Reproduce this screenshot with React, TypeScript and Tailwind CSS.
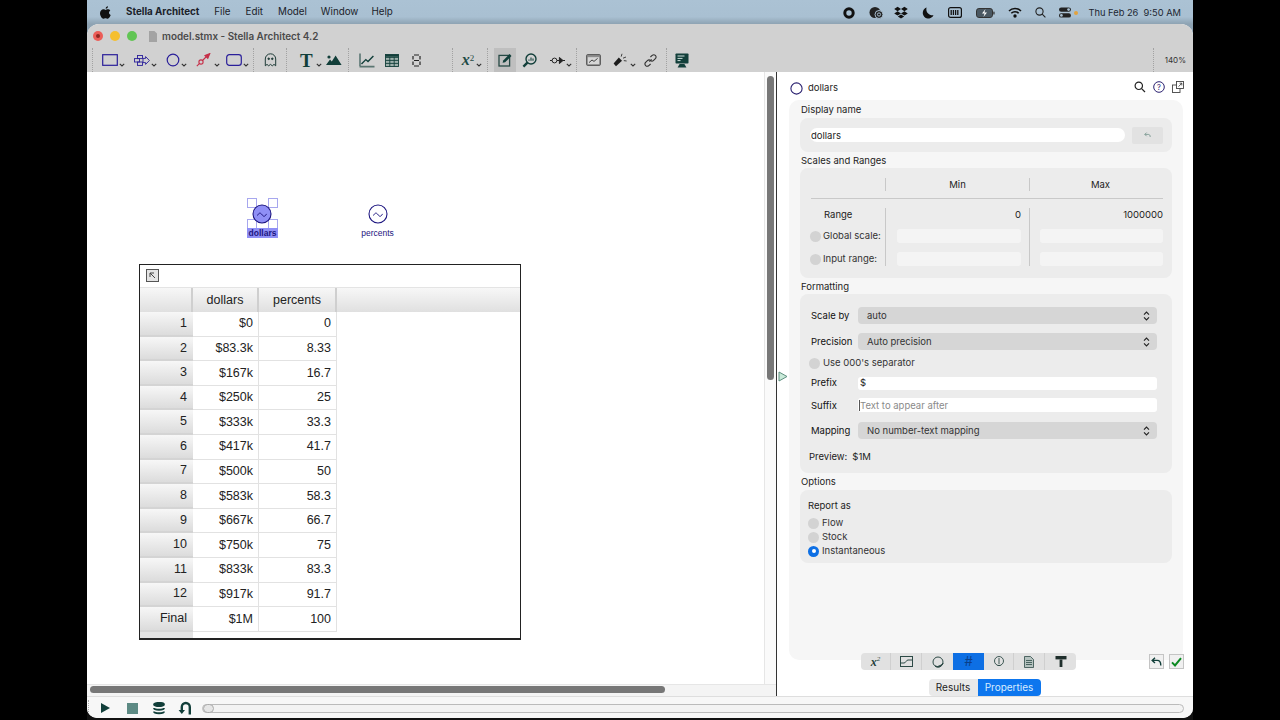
import React from "react";

const NAVY = "#2a1f9a";
const TEAL = "#123f3a";

function Chev({ className = "" }: { className?: string }) {
  return (
    <svg width="6" height="4" viewBox="0 0 6 4" className={className}>
      <path d="M.8.8 3 3 5.2.8" fill="none" stroke="#333" strokeWidth="1.1" />
    </svg>
  );
}

function Sep() {
  return <div className="h-[24px] w-0 border-l border-dotted border-[#a2a2a2]" />;
}

function Wave({ cx, cy }: { cx: number; cy: number }) {
  return (
    <path
      d={`M${cx - 4.5} ${cy + 1.5}c1.5-3 3-3 4.5-.8s3 2.2 4.5-.8`}
      fill="none"
      stroke="#1d1680"
      strokeWidth="1"
    />
  );
}

function Stepper() {
  return (
    <svg width="7" height="10" viewBox="0 0 7 10">
      <path d="M1 3.6 3.5 1 6 3.6M1 6.4 3.5 9 6 6.4" fill="none" stroke="#222" strokeWidth="1.1" />
    </svg>
  );
}

function Radio() {
  return <div className="w-[11px] h-[11px] rounded-full bg-[#d3d3d3] shrink-0" />;
}

function Toolbar() {
  return (
    <div className="h-[24px] flex items-center pl-[5px]">
      <Sep />
      <svg className="ml-[9px]" width="16" height="12" viewBox="0 0 16 12"><rect x=".7" y=".7" width="14.6" height="10.6" fill="none" stroke={NAVY} strokeWidth="1.2" /></svg>
      <Chev className="ml-[1px] mt-[9px]" />
      <svg className="ml-[9px]" width="16" height="11" viewBox="0 0 16 11" fill="none" stroke={NAVY} strokeWidth=".9"><rect x=".5" y="3.600" width="5" height="3.400" /><rect x="3.500" y=".5" width="5" height="3.100" /><rect x="3.500" y="7" width="5" height="3.400" /><path d="M9 3.400h2.600V1.600L15.400 5.500l-3.800 3.900V7.600H9z" /></svg>
      <Chev className="ml-[1px] mt-[9px]" />
      <svg className="ml-[9px]" width="14" height="14" viewBox="0 0 14 14"><circle cx="7" cy="7" r="5.8" fill="none" stroke={NAVY} strokeWidth="1.2" /></svg>
      <Chev className="ml-[1px] mt-[9px]" />
      <svg className="ml-[9px]" width="15" height="14" viewBox="0 0 15 14" fill="none" stroke="#c62f48" strokeWidth="1.1"><path d="M.8 13.2 3.6 10.4" /><circle cx="5" cy="9" r="2.1" /><path d="M6.5 7.5 10 4" /><path d="M9 2.6 13.8.6 11.8 5.4z" fill="#c62f48" /></svg>
      <Chev className="ml-[3px] mt-[9px]" />
      <svg className="ml-[6px]" width="16" height="12" viewBox="0 0 16 12"><rect x=".7" y=".7" width="14.6" height="10.6" rx="2.6" fill="none" stroke={NAVY} strokeWidth="1.2" /></svg>
      <Chev className="ml-[1px] mt-[9px]" />
      <div className="ml-[4px]"><Sep /></div>
      <svg className="ml-[10px]" width="13" height="14" viewBox="0 0 13 14" fill="none" stroke="#1e3b37" strokeWidth="1"><path d="M1.3 12.8V6a5.2 5.2 0 0 1 10.4 0v6.8l-1.7-1.4-1.7 1.4-1.8-1.4-1.8 1.4L3 11.4z" /><circle cx="4.7" cy="5.8" r=".8" fill="#1e3b37" /><circle cx="8.3" cy="5.8" r=".8" fill="#1e3b37" /></svg>
      <div className="ml-[9px]"><Sep /></div>
      <span className="ml-[13px] text-[19px] leading-none font-bold text-[#123f3a] font-['Liberation_Serif',serif]">T</span>
      <Chev className="ml-[3px] mt-[9px]" />
      <svg className="ml-[4px]" width="16" height="12" viewBox="0 0 16 12" fill={TEAL}><circle cx="3" cy="3" r="1.6" /><path d="M0 11 4 5.6l1.8 2L9.6 1.4 15.6 11z" /></svg>
      <div className="ml-[6px]"><Sep /></div>
      <svg className="ml-[10px]" width="16" height="15" viewBox="0 0 16 15" fill="none" stroke={TEAL}><path d="M1 .5v12.6" strokeWidth="1" /><path d="M.5 13.6h15" strokeWidth="1.6" stroke="#5b7672" /><path d="M2.5 11 6.8 6.6l2.2 2L14.4 3" strokeWidth="1.4" /></svg>
      <svg className="ml-[10px]" width="14" height="13" viewBox="0 0 14 13" fill="none" stroke={TEAL} strokeWidth=".9"><rect x=".5" y=".5" width="13" height="12" fill="#9db0ac" /><path d="M.5 3.4h13M.5 6.4h13M.5 9.4h13M4.8 3v9.5M9.2 3v9.5" /><path d="M.5 1.7h13" strokeWidth="2.2" /></svg>
      <svg className="ml-[13px]" width="9" height="13" viewBox="0 0 9 13" fill="none" stroke="#222" strokeWidth="1.2"><path d="M2 1h5M1 2v3.500M8 2v3.500M2 6.500h5M1 7.500v3.500M8 7.500v3.500M2 12h5" /></svg>
      <div className="ml-[31px]"><Sep /></div>
      <span className="ml-[9px] text-[16px] leading-none font-bold italic text-[#1f4b45] font-['Liberation_Serif',serif]">x<sup className="text-[9px] font-normal not-italic">2</sup></span>
      <Chev className="ml-[2px] mt-[9px]" />
      <div className="ml-[5px]"><Sep /></div>
      <div className="ml-[6px] w-[22px] h-[24px] bg-[#bfbfbf] flex items-center justify-center">
        <svg width="15" height="14" viewBox="0 0 15 14" fill="none"><rect x="1" y="2.4" width="10.6" height="10.6" stroke="#264944" strokeWidth="1.3" /><path d="M4.6 9.8 5.2 7.4 11.6 1l1.9 1.9-6.4 6.4z" fill="#123f3a" /></svg>
      </div>
      <svg className="ml-[6px]" width="15" height="15" viewBox="0 0 15 15" fill="none" stroke={TEAL}><circle cx="9" cy="6" r="5" strokeWidth="1.4" /><path d="M5.4 9.6 1.4 13.6" strokeWidth="2.4" /><path d="M7 7.8V6.4M9 7.8V4.6M11 7.8V5.6" strokeWidth="1.1" /></svg>
      <svg className="ml-[13px]" width="15" height="9" viewBox="0 0 15 9" fill="none" stroke="#222" strokeWidth="1"><path d="M0 4.5h2" /><circle cx="4.5" cy="4.5" r="2.4" /><path d="M7 4.5h2.4" /><path d="M9.4 1.4 13 4.5 9.4 7.6z" fill="#222" /><path d="M13 4.5h2" /></svg>
      <Chev className="ml-[1px] mt-[9px]" />
      <div className="ml-[4px]"><Sep /></div>
      <svg className="ml-[9px]" width="15" height="12" viewBox="0 0 15 12" fill="none"><rect x=".6" y=".6" width="13.8" height="10.8" rx="1" fill="#8d8d8d" stroke="#555" /><rect x="1.8" y="3.2" width="11.4" height="7" fill="#d7d7d7" /><path d="M3 8.6 6 6l2 1.4 3.6-3" stroke="#333" strokeWidth=".9" /></svg>
      <svg className="ml-[12px]" width="14" height="14" viewBox="0 0 14 14" fill="#1c1c1c"><path d="M.6 10.6 5.8 4.6 9 7.8 3 13.2z" /><path d="M8.2 3.6 9 .8M10 5.2 13 4M10.8 7.6 13.6 8" stroke="#1c1c1c" strokeWidth=".8" /></svg>
      <Chev className="ml-[3px] mt-[9px]" />
      <svg className="ml-[8px]" width="13" height="13" viewBox="0 0 13 13" fill="none" stroke="#333" strokeWidth="1.1"><path d="M5.4 7.6 7.6 5.4M6.4 3 8.4 1.2a2.3 2.3 0 0 1 3.2 3.2L9.6 6.4a2.3 2.3 0 0 1-3.2 0" /><path d="M6.6 10 4.6 11.8a2.3 2.3 0 0 1-3.2-3.2L3.4 6.6a2.3 2.3 0 0 1 3.2 0" /></svg>
      <div className="ml-[9px]"><Sep /></div>
      <svg className="ml-[8px]" width="14" height="15" viewBox="0 0 14 15"><rect x=".5" y=".5" width="13" height="10" rx=".8" fill={TEAL} /><path d="M2.5 3h7M2.5 5.4h5M2.5 7.6h3" stroke="#cfe0dc" strokeWidth="1" /><path d="M4.6 11h4.8l2 3.4H2.6z" fill={TEAL} /></svg>
      <div className="ml-auto flex items-center">
        <Sep />
        <span className="ml-[11px] mr-[7px] text-[8px] text-[#333]">140%</span>
      </div>
    </div>
  );
}

function StatusIcons() {
  return (
    <div className="ml-auto flex items-center pr-[12px] text-[#111]">
      <svg width="12" height="12" viewBox="0 0 12 12"><circle cx="6" cy="6" r="4.2" fill="none" stroke="#111" strokeWidth="3" /></svg>
      <svg className="ml-[14px]" width="15" height="13" viewBox="0 0 15 13"><circle cx="6" cy="6.5" r="5.5" fill="#222" /><circle cx="10" cy="8.5" r="4" fill="#222" stroke="#a9c0d2" strokeWidth="1" /><circle cx="10" cy="8.5" r="1.6" fill="none" stroke="#a9c0d2" /></svg>
      <svg className="ml-[10px]" width="14" height="13" viewBox="0 0 14 13" fill="#111"><path d="M3.6.8 7 3 3.6 5.2.2 3zM10.4.8 13.8 3l-3.4 2.2L7 3zM3.6 5.2 7 7.4 3.6 9.6.2 7.4zM10.4 5.2l3.4 2.2-3.4 2.2L7 7.4zM3.8 10.4 7 8.4l3.2 2L7 12.4z" /></svg>
      <svg className="ml-[14px]" width="12" height="12" viewBox="0 0 12 12"><path d="M4.6.6a5.6 5.6 0 1 0 6.9 7.6A6 6 0 0 1 4.6.6z" fill="#111" /></svg>
      <svg className="ml-[14px]" width="14" height="11" viewBox="0 0 14 11"><rect x=".6" y=".6" width="12.8" height="9.8" rx="2" fill="none" stroke="#111" strokeWidth="1.2" /><path d="M3.2 3v5M5.4 3v5M7.6 3v5M9.8 3v5" stroke="#111" strokeWidth="1.3" /></svg>
      <svg className="ml-[14px]" width="19" height="10" viewBox="0 0 19 10"><rect x=".5" y=".5" width="16" height="9" rx="2.4" fill="#4a5862" stroke="#333" /><rect x="17.3" y="3.4" width="1.3" height="3.2" rx=".6" fill="#333" /><path d="M9.5 1 6 5.4h2.6L7.4 9 11 4.6H8.4z" fill="#fff" /></svg>
      <svg className="ml-[13px]" width="14" height="11" viewBox="0 0 14 11" fill="none" stroke="#111" strokeWidth="1.6"><path d="M1 4a8.4 8.4 0 0 1 12 0M3.3 6.3a5.2 5.2 0 0 1 7.4 0" /><circle cx="7" cy="9" r=".9" fill="#111" /></svg>
      <svg className="ml-[13px]" width="11" height="11" viewBox="0 0 11 11" fill="none" stroke="#222" strokeWidth="1.1"><circle cx="4.5" cy="4.5" r="3.6" /><path d="M7.2 7.2 10.4 10.4" /></svg>
      <svg className="ml-[13px]" width="13" height="11" viewBox="0 0 13 11"><rect x="0" y=".4" width="12" height="4.4" rx="2.2" fill="#222" /><circle cx="9.6" cy="2.6" r="1.4" fill="#a9c0d2" /><rect x="0" y="6.2" width="12" height="4.4" rx="2.2" fill="#222" /><circle cx="2.4" cy="8.4" r="1.4" fill="#a9c0d2" /></svg>
      <div className="ml-[2px] w-[4px] h-[4px] rounded-full bg-[#e2a23f]" />
      <span className="ml-[10px] text-[9.3px] text-[#1c2630] whitespace-pre">Thu Feb 26  9:50 AM</span>
    </div>
  );
}

function Handle({ className }: { className: string }) {
  return <div className={`absolute w-[10px] h-[10px] bg-white border border-[#a7a7ee] ${className}`} />;
}

const rows = [
  ["1", "$0", "0"], ["2", "$83.3k", "8.33"], ["3", "$167k", "16.7"], ["4", "$250k", "25"],
  ["5", "$333k", "33.3"], ["6", "$417k", "41.7"], ["7", "$500k", "50"], ["8", "$583k", "58.3"],
  ["9", "$667k", "66.7"], ["10", "$750k", "75"], ["11", "$833k", "83.3"], ["12", "$917k", "91.7"],
  ["Final", "$1M", "100"],
];

function DataTable() {
  return (
    <div className="w-[382px] h-[376px] border border-[#222] border-b-[2px] bg-white flex flex-col font-['Liberation_Sans',sans-serif] text-[12.5px] text-[#222]">
      <div className="h-[23px] flex items-center pl-[6px] pb-[2px] shrink-0 border-b border-[#e4e4e4]">
        <div className="w-[13px] h-[13px] bg-[#e4e4e4] border-[1.5px] border-[#555] flex items-center justify-center">
          <svg width="7" height="7" viewBox="0 0 7 7"><path d="M1 1h4M1 1v4M1 1l5 5" stroke="#444" strokeWidth="1" fill="none" /></svg>
        </div>
      </div>
      <div className="h-[24px] flex shrink-0 bg-gradient-to-b from-[#f7f7f7] to-[#e0e0e0]">
        <div className="w-[53px] border-r-2 border-[#cfcfcf]" />
        <div className="w-[66px] border-r-2 border-[#cfcfcf] flex items-center justify-center">dollars</div>
        <div className="w-[78px] border-r-2 border-[#cfcfcf] flex items-center justify-center">percents</div>
      </div>
      {rows.map((r) => (
        <div key={r[0]} className="h-[24.6px] flex shrink-0">
          <div className="w-[53px] flex items-center justify-end pr-[6px] bg-gradient-to-b from-[#f7f7f7] to-[#dcdcdc] border-b-2 border-[#d4d4d4]">{r[0]}</div>
          <div className="w-[66px] flex items-center justify-end pr-[5px] border-r border-b border-[#e2e2e2]">{r[1]}</div>
          <div className="w-[78px] flex items-center justify-end pr-[5px] border-r border-b border-[#e2e2e2]">{r[2]}</div>
        </div>
      ))}
      <div className="w-[53px] flex-1 bg-[#e2e2e2]" />
    </div>
  );
}

function Canvas() {
  return (
    <div className="relative flex-1 bg-white pl-[52px] pt-[192px]">
      <div className="absolute left-[160px] top-[126px] w-[31px] h-[41px]">
        <Handle className="left-0 top-0" />
        <Handle className="right-0 top-0" />
        <Handle className="left-0 top-[21px]" />
        <Handle className="right-0 top-[21px]" />
        <svg className="absolute left-[5px] top-[6px]" width="20" height="20" viewBox="0 0 20 20">
          <circle cx="10" cy="10" r="9" fill="#8f8ff6" stroke="#1d1680" strokeWidth="1.1" />
          <Wave cx={10} cy={10} />
        </svg>
        <div className="absolute left-0 top-[30px] w-[31px] h-[10px] bg-[#8f8ff6] text-[8.5px] leading-[10px] font-bold text-center text-[#1d1680] font-['Liberation_Sans',sans-serif]">dollars</div>
      </div>
      <div className="absolute left-[270px] top-[132px] w-[41px] flex flex-col items-center">
        <svg width="20" height="20" viewBox="0 0 20 20">
          <circle cx="10" cy="10" r="9" fill="none" stroke="#1d1680" strokeWidth="1.1" />
          <Wave cx={10} cy={10} />
        </svg>
        <span className="mt-[4px] text-[8.5px] leading-[10px] text-[#1d1680] font-['Liberation_Sans',sans-serif]">percents</span>
      </div>
      <DataTable />
    </div>
  );
}

function SelectBox({ label, value }: { label: string; value: string }) {
  return (
    <div className="flex items-center h-[17px] pl-[11px]">
      <span className="w-[47px] text-[#111] pt-[1px]">{label}</span>
      <div className="w-[299px] h-[17px] rounded-[4px] bg-[#d6d6d6] flex items-center justify-between pl-[9px] pr-[7px] text-[#333]">
        <span className="pt-[1px]">{value}</span>
        <Stepper />
      </div>
    </div>
  );
}

function Properties() {
  return (
    <div className="w-[416px] flex flex-col font-['Inter',sans-serif] text-[9.5px] bg-white relative">
      <div className="h-[28px] flex items-center pl-[13px] pr-[9px] pt-[4px] shrink-0">
        <svg width="13" height="13" viewBox="0 0 13 13"><circle cx="6.5" cy="6.5" r="5.6" fill="none" stroke="#2b2170" strokeWidth="1.1" /></svg>
        <span className="ml-[5px] text-[#222]">dollars</span>
        <div className="ml-auto flex items-center gap-[7px] -mt-[2px]">
          <svg width="12" height="12" viewBox="0 0 12 12" fill="none" stroke="#222" strokeWidth="1.2"><circle cx="4.8" cy="4.8" r="3.7" /><path d="M7.6 7.6 11 11" /></svg>
          <svg width="12" height="12" viewBox="0 0 12 12" fill="none" stroke="#2b2170"><circle cx="6" cy="6" r="5.3" /><text x="6" y="8.7" textAnchor="middle" fontSize="7.5" fill="#2b2170" stroke="none">?</text></svg>
          <svg width="12" height="12" viewBox="0 0 12 12" fill="none" stroke="#444" strokeWidth=".9"><rect x=".5" y="4" width="7.5" height="7.5" /><rect x="4.5" y=".5" width="7" height="7" fill="#fff" /><path d="M6.6 5.6 9.8 2.2M7.6 2.2h2.2v2.2" /></svg>
        </div>
      </div>
      <div className="ml-[12px] mr-[10px] h-[560px] rounded-[10px] bg-[#f6f6f6] shrink-0">
        <div className="h-[18px] pl-[12px] pt-[2px] flex items-center text-[#1d1d1d]">Display name</div>
        <div className="mx-[11px] h-[34px] rounded-[8px] bg-[#ececec] flex items-center pl-[10px]">
          <div className="w-[315px] h-[14px] rounded-full bg-white flex items-center pl-[1px] pt-[2px] text-[#222]">dollars</div>
          <div className="ml-[7px] w-[31px] h-[17px] rounded-[2px] bg-[#e2e2e2] flex items-center justify-center">
            <svg width="7" height="6" viewBox="0 0 7 6" fill="none" stroke="#7d9a92" strokeWidth=".9"><path d="M2.6.6.8 2.4l1.8 1.8M.8 2.4h3.4c1.4 0 2 .8 2 2.6" /></svg>
          </div>
        </div>
        <div className="h-[16px] pl-[12px] pt-[2px] flex items-center text-[#1d1d1d]">Scales and Ranges</div>
        <div className="mx-[11px] h-[110px] rounded-[8px] bg-[#ececec] pl-[11px] pr-[9px] pt-[10px]">
          <div className="flex h-[13px] items-center text-[#222]">
            <div className="w-[74px] h-full" />
            <div className="w-[144px] h-full border-l border-[#c8c8c8] flex items-center justify-center pt-[1px]">Min</div>
            <div className="flex-1 h-full border-l border-[#c8c8c8] flex items-center justify-center pl-[8px] pt-[1px]">Max</div>
          </div>
          <div className="mt-[7px] border-t border-[#c9c9c9]" />
          <div className="mt-[9px] flex">
            <div className="w-[74px] flex flex-col">
              <div className="h-[15px] pl-[13px] flex items-center text-[#222]">Range</div>
              <div className="mt-[6px] h-[14px] flex items-center gap-[2px] text-[#333]"><div className="-ml-[1px]"><Radio /></div><span>Global scale:</span></div>
              <div className="mt-[9px] h-[14px] flex items-center gap-[2px] text-[#333]"><div className="-ml-[1px]"><Radio /></div><span>Input range:</span></div>
            </div>
            <div className="w-[144px] border-l border-[#c8c8c8] flex flex-col pl-[11px] pr-[8px]">
              <div className="h-[15px] flex items-center justify-end text-[#222]">0</div>
              <div className="mt-[6px] h-[14px] rounded-[3px] bg-[#f4f4f4]" />
              <div className="mt-[9px] h-[14px] rounded-[3px] bg-[#f4f4f4]" />
            </div>
            <div className="flex-1 border-l border-[#c8c8c8] flex flex-col pl-[10px]">
              <div className="h-[15px] flex items-center justify-end text-[#222]">1000000</div>
              <div className="mt-[6px] h-[14px] rounded-[3px] bg-[#f4f4f4]" />
              <div className="mt-[9px] h-[14px] rounded-[3px] bg-[#f4f4f4]" />
            </div>
          </div>
        </div>
        <div className="h-[16px] pl-[12px] pt-[2px] flex items-center text-[#1d1d1d]">Formatting</div>
        <div className="mx-[11px] h-[179px] rounded-[8px] bg-[#ececec] pt-[13px]">
          <SelectBox label="Scale by" value="auto" />
          <div className="mt-[9px]"><SelectBox label="Precision" value="Auto precision" /></div>
          <div className="mt-[6px] h-[14px] pl-[9px] flex items-center gap-[3px] text-[#333]"><Radio /><span className="pt-[1px]">Use 000's separator</span></div>
          <div className="mt-[6px] h-[14px] pl-[11px] flex items-center">
            <span className="w-[47px] pt-[1px] text-[#111]">Prefix</span>
            <div className="w-[299px] h-[13px] rounded-[3px] bg-white flex items-center pl-[2px] pt-[1px] text-[#222]">$</div>
          </div>
          <div className="mt-[8px] h-[14px] pl-[11px] flex items-center">
            <span className="w-[47px] pt-[2px] text-[#111]">Suffix</span>
            <div className="w-[299px] h-[14px] rounded-[3px] bg-white flex items-center pl-[1px] text-[#8a8a8a]"><span className="w-px h-[11px] bg-[#555]" /><span className="pt-[2px]">Text to appear after</span></div>
          </div>
          <div className="mt-[10px]"><SelectBox label="Mapping" value="No number-text mapping" /></div>
          <div className="mt-[11px] h-[14px] pl-[9px] flex items-center text-[#222] gap-[5px]"><span>Preview:</span><span>$1M</span></div>
        </div>
        <div className="h-[17px] pl-[12px] pt-[2px] flex items-center text-[#1d1d1d]">Options</div>
        <div className="mx-[11px] h-[73px] rounded-[8px] bg-[#ececec] pt-[9px] pl-[8px] text-[#333]">
          <div className="h-[14px] flex items-center text-[#222]">Report as</div>
          <div className="mt-[3px] h-[14px] flex items-center gap-[3px]"><Radio /><span>Flow</span></div>
          <div className="h-[14px] flex items-center gap-[3px]"><Radio /><span>Stock</span></div>
          <div className="h-[14px] flex items-center gap-[3px]">
            <div className="w-[11px] h-[11px] rounded-full bg-[#0d6fe4] flex items-center justify-center"><div className="w-[4px] h-[4px] rounded-full bg-white" /></div>
            <span>Instantaneous</span>
          </div>
        </div>
      </div>
      <div className="h-[17px] -mt-[7px] flex items-center pl-[84px] pr-[9px] shrink-0 relative">
        <div className="w-[215px] h-[17px] rounded-[4px] bg-[#e1e1e1] flex items-center">
          <div className="w-[30px] h-[17px] flex items-center justify-center border-r border-[#cfcfcf] font-['Liberation_Serif',serif] italic font-bold text-[12px] leading-none text-[#1f3f3a]">x<span className="text-[7px] -mt-[5px] font-normal">2</span></div>
          <div className="w-[31px] h-[17px] flex items-center justify-center border-r border-[#cfcfcf]"><svg width="13" height="11" viewBox="0 0 13 11" fill="none" stroke="#2d4a46"><rect x=".5" y=".5" width="12" height="10" /><path d="M.5 7H4c2 0 2-3 4-3h4.5" /></svg></div>
          <div className="w-[31px] h-[17px] flex items-center justify-center"><svg width="12" height="12" viewBox="0 0 12 12" fill="none" stroke="#2d4a46"><circle cx="6" cy="6" r="5" /><path d="M11 7A5 5 0 0 1 3 10 5 5 0 0 0 8 9.600 5 5 0 0 0 11 7z" fill="#2d4a46" /></svg></div>
          <div className="w-[31px] h-[17px] bg-[#0d6fe4] flex items-center justify-center text-[13px] text-[#0a3f8a]">#</div>
          <div className="w-[30px] h-[17px] flex items-center justify-center border-r border-[#cfcfcf]"><svg width="12" height="11" viewBox="0 0 12 11" fill="none" stroke="#2d4a46" strokeWidth=".9"><circle cx="6" cy="5" r="4.5" /><path d="M6 2v6M4.500 9.500h3" /></svg></div>
          <div className="w-[31px] h-[17px] flex items-center justify-center border-r border-[#cfcfcf]"><svg width="10" height="12" viewBox="0 0 10 12" fill="#b5c2bf" stroke="#2d4a46" strokeWidth=".8"><path d="M.5.500h6L9.500 3.500v8h-9z" /><path d="M2 4.500h6M2 6.500h6M2 8.500h6" /></svg></div>
          <div className="flex-1 flex justify-center"><svg width="12" height="11" viewBox="0 0 12 11" fill="#1f2f2c"><rect x=".5" y="0" width="11" height="3.400" /><path d="M4.600 3.400h2.800V11H4.600z" /></svg></div>
        </div>
        <div className="ml-auto flex gap-[5px]">
          <div className="w-[15px] h-[15px] bg-[#f0f0f0] border border-[#c4c4c4] flex items-center justify-center">
            <svg width="11" height="10" viewBox="0 0 11 10" fill="none" stroke="#123f3a" strokeWidth="1.4"><path d="M4 .8 1.2 3.400 4 6M1.200 3.400h5c2.400 0 3.600 1.400 3.600 5" /></svg>
          </div>
          <div className="w-[15px] h-[15px] bg-[#f0f0f0] border border-[#c4c4c4] flex items-center justify-center">
            <svg width="11" height="10" viewBox="0 0 11 10" fill="none" stroke="#0b8a22" strokeWidth="2"><path d="M1 5.400 4 8.400 10 1.200" /></svg>
          </div>
        </div>
      </div>
      <div className="mt-[9px] flex justify-center pr-[1px] shrink-0 text-[10px]">
        <div className="h-[17px] w-[49px] rounded-l-[4px] bg-[#e9e9e9] flex items-center justify-center text-[#222]">Results</div>
        <div className="h-[17px] w-[63px] rounded-r-[4px] bg-[#0d76ee] flex items-center justify-center text-[#d8ecff]">Properties</div>
      </div>
    </div>
  );
}

export default function App() {
  return (
    <div className="w-[1280px] h-[720px] bg-black flex justify-center overflow-hidden font-['Inter',sans-serif]">
      <div className="w-[1106px] h-[720px] flex flex-col">
        <div className="h-[24px] flex items-center shrink-0 pt-[1px] text-[9.8px] text-[#1b222a] bg-gradient-to-b from-[#abc2d4] via-[#a9c0d2] via-70% to-[#8ea3b3]">
          <span className="ml-[13px] w-[11px] flex justify-center">
            <svg width="11" height="13" viewBox="0 0 11 13" fill="#111"><path d="M8 .2c.1 1-.8 2.500-2.300 2.500C5.500 1.500 6.700.3 8 .2zM9 6.800c0-1.400 1-2 1.300-2.300C9.600 3.500 8.500 3.300 8 3.300c-1-.1-1.900.6-2.400.6s-1.300-.6-2.100-.6C1.600 3.300 0 5 0 7.300c0 2.500 2 5.500 3.400 5.500.7 0 1.200-.5 2.100-.5s1.300.5 2.100.5c1.500 0 2.800-2.700 3.100-3.800C9.700 8.600 9 7.800 9 6.800z" /></svg>
          </span>
          <span className="ml-[15px] font-bold">Stella Architect</span>
          <span className="ml-[15px]">File</span>
          <span className="ml-[15px]">Edit</span>
          <span className="ml-[15px]">Model</span>
          <span className="ml-[14px]">Window</span>
          <span className="ml-[13px]">Help</span>
          <StatusIcons />
        </div>
        <div className="flex-1 pb-[2px] min-h-0 flex bg-[linear-gradient(#8ea3b3_14px,#111_14px)]">
          <div className="flex-1 rounded-t-[12px] rounded-b-[10px] overflow-hidden flex flex-col bg-white">
            <div className="h-[48px] bg-[#d1d1d1] shrink-0 flex flex-col">
              <div className="h-[24px] flex items-center pl-[6px]">
                <div className="w-[10px] h-[10px] rounded-full bg-[#ec5d57] flex items-center justify-center"><div className="w-[4px] h-[4px] rounded-full bg-[#8d2620]" /></div>
                <div className="ml-[7px] w-[10px] h-[10px] rounded-full bg-[#f5bf2f]" />
                <div className="ml-[7px] w-[10px] h-[10px] rounded-full bg-[#61c554]" />
                <svg className="ml-[12px]" width="8" height="11" viewBox="0 0 8 11"><path d="M0 0h5.400L8 2.600V11H0z" fill="#a3a3a3" /></svg>
                <span className="ml-[5px] text-[9.9px] font-semibold text-[#4a4a4a]">model.stmx - Stella Architect 4.2</span>
              </div>
              <Toolbar />
            </div>
            <div className="flex-1 flex min-h-0">
              <div className="w-[689px] flex flex-col">
                <div className="flex-1 flex min-h-0">
                  <Canvas />
                  <div className="w-[12px] bg-[#fafafa] border-l border-[#e6e6e6] pl-[2px] pt-[4px]">
                    <div className="w-[7px] h-[304px] rounded-full bg-[#777]" />
                  </div>
                </div>
                <div className="h-[12px] bg-[#f4f4f4] border-t border-[#e6e6e6] shrink-0 pl-[3px] pt-[1px]">
                  <div className="w-[575px] h-[7px] rounded-full bg-[#777]" />
                </div>
              </div>
              <div className="w-px bg-[#333]" />
              <svg className="absolute z-10 left-[778px] top-[371px]" width="10" height="11" viewBox="0 0 10 11"><path d="M1 1 9 5.500 1 10z" fill="#c9ead9" stroke="#5f8f80" /></svg>
              <Properties />
            </div>
            <div className="h-[22px] shrink-0 bg-[#f7f7f7] border-t border-[#dedede] flex items-center pl-[1px] pr-[9px] pt-[1px]">
              <div className="h-[16px] border-l border-dotted border-[#aaa]" />
              <svg className="ml-[12px]" width="9" height="10" viewBox="0 0 9 10"><path d="M0 0 9 5 0 10z" fill={TEAL} /></svg>
              <div className="ml-[17px] w-[11px] h-[11px] bg-[#5d8a84]" />
              <svg className="ml-[15px]" width="12" height="13" viewBox="0 0 12 13" fill="none" stroke={TEAL} strokeWidth="1.8"><ellipse cx="6" cy="2.500" rx="5" ry="1.700" fill={TEAL} /><path d="M1 6c0 2.300 10 2.300 10 0M1 9.500c0 2.300 10 2.300 10 0" /></svg>
              <svg className="ml-[13px]" width="14" height="14" viewBox="0 0 14 14" fill="none" stroke={TEAL} strokeWidth="2.400"><path d="M11.800 13.500V6a4 4 0 0 0-8 0v4.500" /><path d="M.6 9 3.800 13 7 9z" fill={TEAL} stroke="none" /></svg>
              <div className="ml-[10px] flex-1 h-[9px] rounded-full border border-[#bbb] bg-[#f3f3f3] relative">
                <div className="absolute left-0 -top-[1px] w-[11px] h-[9px] rounded-full bg-[#e6e6e6] border border-[#aaa]" />
              </div>
            </div>
          </div>
        </div>
      </div>
    </div>
  );
}
